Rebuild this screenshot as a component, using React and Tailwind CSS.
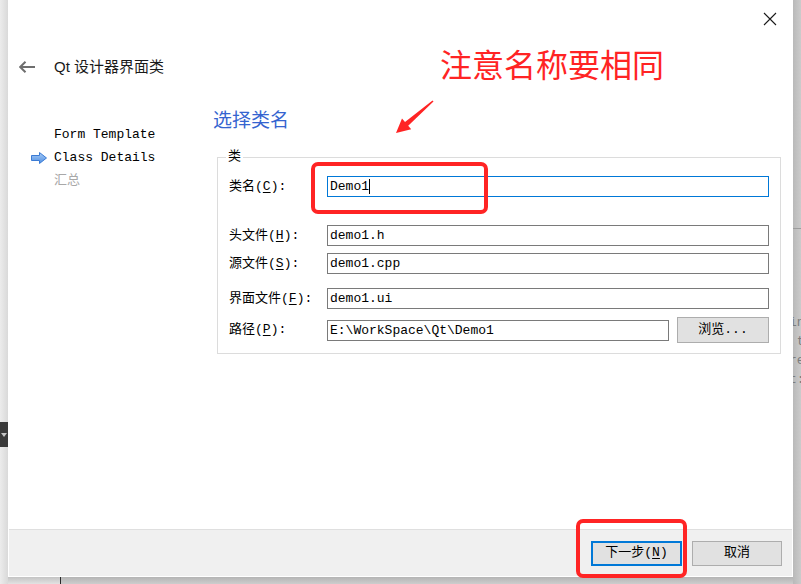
import React from 'react';

const mono = "font-['Liberation_Mono','Noto_Sans_CJK_SC',monospace]";

const Key = ({ k }) => (
  <>
    (<span className="underline underline-offset-2">{k}</span>)
  </>
);

const Field = ({ label, value, focused, mt }) => (
  <div className={`flex items-center h-[21px] ${mt}`}>
    <div className="w-[98px] shrink-0 text-[13px] text-black">{label}</div>
    <div
      className={`w-[442px] h-[21px] flex items-center px-[2px] bg-white border ${
        focused ? 'border-[#0078d7]' : 'border-[#7a7a7a]'
      }`}
    >
      <span className="text-[13px] text-black leading-none">{value}</span>
      {focused && <span className="w-px h-[15px] bg-black" />}
    </div>
  </div>
);

const NavItem = ({ active, muted, children }) => (
  <div className="flex items-center h-[23px] pl-[22px] gap-[7px]">
    <div className="w-[16px] h-[12px]">
      {active && (
        <svg width="16" height="12" viewBox="0 0 16 12">
          <defs>
            <linearGradient id="navArrow" x1="0" y1="0" x2="0" y2="1">
              <stop offset="0" stopColor="#a9ccf7" />
              <stop offset="1" stopColor="#4e8fe2" />
            </linearGradient>
          </defs>
          <polygon
            points="0.5,3.5 8.5,3.5 8.5,0.5 15.5,6 8.5,11.5 8.5,8.5 0.5,8.5"
            fill="url(#navArrow)"
            stroke="#3b7bd4"
            strokeWidth="1"
          />
        </svg>
      )}
    </div>
    <span className={`text-[13px] ${muted ? 'text-[#a8a8a8]' : 'text-black'}`}>{children}</span>
  </div>
);

const App = () => {
  return (
    <div className={`relative w-[801px] h-[584px] flex overflow-hidden bg-[#d2d2d2] ${mono}`}>
      {/* left desktop strip */}
      <div className="w-[8px] flex flex-col bg-gradient-to-r from-[#ececec] to-[#d9d9d9]">
        <div className="h-[422px]" />
        <div className="h-[25px] bg-[#3a3a3a] flex items-center justify-end pr-[1px]">
          <div className="w-0 h-0 border-l-[3px] border-r-[3px] border-t-[4px] border-l-transparent border-r-transparent border-t-[#c4c4c4]" />
        </div>
      </div>

      {/* dialog + strip below */}
      <div className="w-[785px] flex flex-col">
        <div className="h-[577px] bg-white border border-white flex flex-col">
          {/* close */}
          <div className="h-[43px] flex justify-end pt-[11px] pr-[15px]">
            <svg width="14" height="14" viewBox="0 0 14 14">
              <path d="M1 1 L13 13 M13 1 L1 13" stroke="#1a1a1a" strokeWidth="1.1" />
            </svg>
          </div>

          {/* title */}
          <div className="h-[46px] flex items-center pl-[10px] gap-[19px]">
            <svg width="16" height="12" viewBox="0 0 16 12">
              <path d="M1 6 H16 M6.5 0.8 L1.2 6 L6.5 11.2" stroke="#6e6e6e" strokeWidth="2" fill="none" />
            </svg>
            <span className="text-[15px] text-[#1a1a1a] font-['Liberation_Sans','Noto_Sans_CJK_SC',sans-serif]">
              Qt 设计器界面类
            </span>
          </div>

          {/* body */}
          <div className="flex-1 flex">
            <div className="w-[204px] pt-[33px]">
              <NavItem>Form Template</NavItem>
              <NavItem active>Class Details</NavItem>
              <NavItem muted>汇总</NavItem>
            </div>

            <div className="flex-1">
              <div className="mt-[16px] h-[26px] leading-[26px] text-[19px] text-[#3564d0] font-['Noto_Sans_CJK_SC',sans-serif]">
                选择类名
              </div>

              <div className="relative mt-[25px] ml-[4px] w-[564px] border border-[#dcdcdc] pl-[11px] pb-[10px]">
                <span className="absolute -top-[10px] left-[8px] px-[2px] bg-white text-[13px] leading-[18px] text-black">
                  类
                </span>

                <Field mt="mt-[18px]" label={<>类名<Key k="C" />:</>} value="Demo1" focused />
                <Field mt="mt-[28px]" label={<>头文件<Key k="H" />:</>} value="demo1.h" />
                <Field mt="mt-[7px]" label={<>源文件<Key k="S" />:</>} value="demo1.cpp" />
                <Field mt="mt-[14px]" label={<>界面文件<Key k="F" />:</>} value="demo1.ui" />

                <div className="flex items-center h-[26px] mt-[8px]">
                  <div className="w-[98px] shrink-0 text-[13px] text-black">
                    路径<Key k="P" />:
                  </div>
                  <div className="w-[342px] h-[21px] flex items-center px-[2px] border border-[#7a7a7a]">
                    <span className="text-[13px] text-black leading-none">E:\WorkSpace\Qt\Demo1</span>
                  </div>
                  <div className="ml-[8px] w-[92px] h-[26px] flex items-center justify-center bg-[#e1e1e1] border border-[#adadad] text-[13px] text-black">
                    浏览...
                  </div>
                </div>
              </div>
            </div>
          </div>

          {/* footer */}
          <div className="h-[47px] border-t border-[#dfdfdf] bg-[#f0f0f0] flex items-center justify-end gap-[10px] pr-[10px]">
            <div className="w-[91px] h-[25px] flex items-center justify-center bg-[#e1e1e1] border-2 border-[#0078d7] text-[13px] text-black">
              下一步<Key k="N" />
            </div>
            <div className="w-[90px] h-[25px] flex items-center justify-center bg-[#e1e1e1] border border-[#adadad] text-[13px] text-black">
              取消
            </div>
          </div>
        </div>

        {/* strip below dialog */}
        <div className="flex-1 flex">
          <div className="w-[52px] bg-gradient-to-b from-[#c4c4c4] to-[#e2e2e2]" />
          <div className="w-px bg-[#2a2a2a]" />
          <div className="flex-1 bg-gradient-to-b from-[#b4b4b4] to-[#cdcdcd]" />
        </div>
      </div>

      {/* right desktop strip */}
      <div className="flex-1 flex flex-col bg-gradient-to-r from-[#b9b9b9] to-[#cbcbcb] overflow-hidden">
        <div className="h-[228px]" />
        <div className="h-px bg-[#9c9c9c]" />
        <div className="pt-[84px] -ml-[4px] text-[13px] leading-[19px] text-[#7c7c7c] whitespace-nowrap">
          <div>in</div>
          <div>&nbsp;t</div>
          <div>re</div>
          <div>t:</div>
        </div>
      </div>

      {/* red annotations */}
      <svg className="absolute inset-0 pointer-events-none" width="801" height="584" viewBox="0 0 801 584">
        <rect x="313" y="164" width="173" height="48" rx="5" fill="none" stroke="#ff2424" strokeWidth="4" />
        <rect x="578" y="521" width="107" height="55" rx="5" fill="none" stroke="#ff2424" strokeWidth="4" />
        <polygon
          points="433.5,101.6 408.2,125.8 411.2,129.2 396,133 402,118.6 405,122 432.5,100.4"
          fill="#ff2424"
        />
      </svg>
      <div className="absolute left-[440px] top-[43px] pointer-events-none text-[32px] leading-[40px] text-[#ff2424] font-['Noto_Sans_CJK_SC',sans-serif]">
        注意名称要相同
      </div>
    </div>
  );
};

export default App;
